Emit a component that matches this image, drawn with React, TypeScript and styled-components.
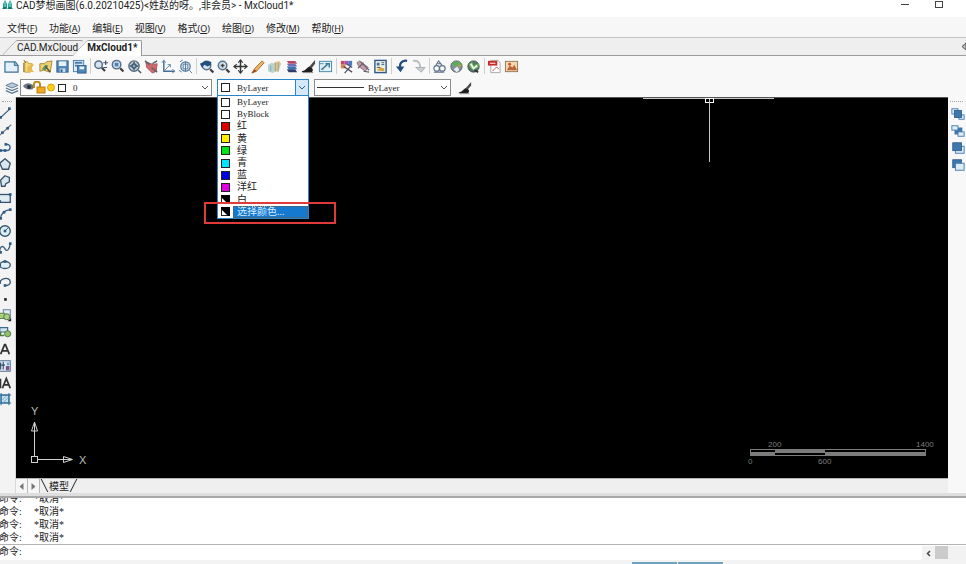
import React from "react";
import styled, { createGlobalStyle, css } from "styled-components";

const UI = `Roboto, "Noto Sans CJK SC", sans-serif`;
const SONG = `"Liberation Serif", "Noto Sans CJK SC", serif`;

const GlobalStyle = createGlobalStyle`
  *, *::before, *::after { box-sizing: border-box; }
  html, body, #root { height: 100%; }
  body { margin: 0; background: #f7f7f7; color: #222; font: 10px/14px ${UI}; overflow: hidden; }
  :where(button, select, input) { font: inherit; color: inherit; margin: 0; padding: 0; border: 0; background: none; border-radius: 0; }
  ul { list-style: none; margin: 0; padding: 0; }
  svg { display: block; flex: none; }
`;

const Window = styled.div`
  display: flex;
  flex-direction: column;
  height: 100vh;
`;

const TitleBar = styled.header`
  display: flex;
  flex: none;
  height: 17px;
  padding: 0 18px 0 2px;
  background: #fff;
`;

const Title = styled.h1`
  flex: 1;
  margin: 0 0 0 3px;
  font-size: 10px;
  line-height: 12px;
  font-weight: 400;
  white-space: nowrap;
`;

const WindowButtons = styled.div`
  display: flex;
  gap: 20px;
`;

const WindowButton = styled.button`
  width: 14px;
  height: 10px;
`;

const MenuBar = styled.nav`
  display: flex;
  flex: none;
  gap: 12px;
  height: 21px;
  padding: 2px 7px 0;
  background: #f7f7f7;
  border-bottom: 1px solid #c4c4c4;
`;

const MenuButton = styled.button`
  font: 10px/14px "Noto Sans CJK SC", sans-serif;
  white-space: nowrap;
  span { font-size: 9px; font-family: "Noto Sans", sans-serif; }
`;

const DocTabs = styled.div`
  display: flex;
  flex: none;
  height: 18px;
  padding: 2px 0 0 2px;
  background: #efefef;
  border-bottom: 1px solid #9d9d9d;
`;

const DocTab = styled.button<{ $active?: boolean }>`
  position: relative;
  height: 16px;
  padding: 0 5px 0 15px;
  margin-left: ${(p) => (p.$active ? -11 : 0)}px;
  line-height: 14px;
  font-weight: ${(p) => (p.$active ? 700 : 400)};
  text-align: left;
  white-space: nowrap;

  &::before, &::after {
    content: "";
    position: absolute;
    top: 0;
    bottom: ${(p) => (p.$active ? 0 : 1)}px;
    border-top: 1px solid #999;
    background: ${(p) => (p.$active ? "#fff" : "#efefef")};
  }
  &::before {
    left: 0;
    width: 40px;
    border-left: 1px solid #999;
    transform: skewX(-43deg);
    transform-origin: bottom left;
    border-top-left-radius: 2px;
  }
  &::after {
    left: 36px;
    right: 0;
    border-right: ${(p) => (p.$active ? "1px solid #999" : "0")};
    border-top-right-radius: 2px;
  }
  span { position: relative; z-index: 1; }
`;

const TabScroll = styled.button`
  width: 5px;
  height: 12px;
  margin-left: auto;
`;

const Toolbar = styled.div`
  display: flex;
  flex: none;
  align-items: center;
  height: 22px;
  padding: 0 0 2px 3px;
  background: #f8f8f8;
`;

const ToolButton = styled.button`
  display: grid;
  place-items: center;
  flex: none;
  width: 17px;
  height: 17px;
`;

const Separator = styled.span`
  flex: none;
  width: 1px;
  height: 16px;
  margin: 0 1px 0 2px;
  background: #cfcfcf;
`;

const PropertyBar = styled.div`
  display: flex;
  flex: none;
  align-items: center;
  gap: 5px;
  height: 19px;
  background: #f8f8f8;
`;

const LayerGroup = styled.div`
  display: flex;
  align-items: center;
  padding-left: 3px;
`;

const comboFrame = css<{ $open?: boolean }>`
  display: flex;
  align-items: center;
  height: 17px;
  background: #fff;
  border: 1px solid ${(p) => (p.$open ? "#2b84c4" : "#8b8b8b")};
  font: 9px/12px ${SONG};
`;

const Combo = styled.label<{ $size: number }>`
  ${comboFrame}
  width: ${(p) => p.$size}px;
  padding: 0 2px;
  gap: 2px;
`;

const ComboSelect = styled.select<{ $indent: number }>`
  flex: 1;
  min-width: 0;
  appearance: none;
  outline: 0;
  padding-left: ${(p) => p.$indent}px;
`;

const ComboAnchor = styled.div`
  position: relative;
`;

const ComboButton = styled.button`
  ${comboFrame}
  width: 92px;
  padding-left: 3px;
  gap: 7px;
  text-align: left;
`;

const ComboArrow = styled.span`
  display: grid;
  place-items: center;
  width: 13px;
  height: 15px;
  margin-left: auto;
  background: #d3e8f8;
  border-left: 1px solid #2b84c4;
`;

const ColorList = styled.ul`
  position: absolute;
  z-index: 5;
  top: 17px;
  left: 0;
  right: 0;
  display: grid;
  grid-auto-rows: 1fr;
  height: 123px;
  background: #fff;
  border: 1px solid #2b84c4;
  border-top: 0;
  font: 9px/12px ${SONG};
`;

const ColorOption = styled.li`
  position: relative;
  display: flex;
  align-items: stretch;
  padding-left: 3px;
`;

const OptionSwatch = styled.span`
  display: flex;
  align-items: center;
  width: 12px;
`;

const OptionLabel = styled.span<{ $selected: boolean; $cjk: boolean }>`
  flex: 1;
  padding-left: 4px;
  font-size: ${(p) => (p.$cjk ? 10 : 9)}px;
  color: ${(p) => (p.$selected ? "#d8ecff" : "#222")};
  background: ${(p) => (p.$selected ? "#1579d0" : "transparent")};
  outline: ${(p) => (p.$selected ? "1px dotted #6b5a48" : "0")};
  outline-offset: -1px;
  white-space: nowrap;
`;

const Highlight = styled.span`
  position: absolute;
  inset: -4px -28px -6px -14px;
  border: 2px solid #e03a3a;
`;

const Workspace = styled.div`
  display: flex;
  flex: 1;
  min-height: 0;
`;

const DrawTools = styled.aside`
  flex: none;
  width: 16px;
  overflow: hidden;
  background: #f3f3f4;
  border-right: 1px solid #d8d8d8;
`;

const Grip = styled.div`
  height: 1px;
  margin: 4px 3px 3px 2px;
  border-top: 1px dotted #a5a5a5;
`;

const DrawStack = styled.div`
  display: flex;
  flex-direction: column;
  height: 303px;
`;

const DrawButton = styled.button`
  display: flex;
  flex: 1;
  align-items: center;
  width: 14px;
  margin-left: -2px;
`;

const Drawing = styled.main`
  display: flex;
  flex: 1;
  flex-direction: column;
  min-width: 0;
`;

const Canvas = styled.section`
  position: relative;
  flex: 1;
  min-height: 0;
  overflow: hidden;
  background: #000;
  border-top: 1px solid #555;
`;

const Crosshair = styled.svg`
  position: absolute;
  top: -1px;
  right: 173px;
`;

const UcsIcon = styled.svg`
  position: absolute;
  left: 12px;
  bottom: 12px;
  font: 11px "Liberation Sans", sans-serif;
`;

const ScaleBar = styled.svg`
  position: absolute;
  right: 11px;
  bottom: 12px;
  font: 8px "Liberation Sans", sans-serif;
`;

const SheetTabs = styled.div`
  display: flex;
  flex: none;
  height: 15px;
  background: #efefef;
  border-top: 1px solid #b5b5b5;
`;

const SheetArrow = styled.button`
  display: grid;
  place-items: center;
  width: 12px;
  border-right: 1px solid #b8b8b8;
  background: #f6f6f6;
`;

const SheetTab = styled.button`
  position: relative;
  height: 13px;
  padding: 0 9px;
  font: 10px/12px "Noto Sans CJK SC", sans-serif;
  &::before, &::after {
    content: "";
    position: absolute;
    top: 0;
    bottom: 0;
    width: 1px;
    background: #222;
  }
  &::before { left: 4px; transform: skewX(27deg); }
  &::after { right: 4px; transform: skewX(-27deg); }
`;

const OrderTools = styled.aside`
  flex: none;
  width: 18px;
  background: #f8f8f8;
`;

const OrderButton = styled.button`
  display: block;
  height: 17px;
  padding-left: 3px;
`;

const Splitter = styled.div`
  flex: none;
  height: 5px;
  background: #dedede;
  border-bottom: 2px solid #a8a8a8;
`;

const CommandLog = styled.section`
  display: flex;
  flex: none;
  flex-direction: column;
  justify-content: flex-end;
  height: 47px;
  overflow: hidden;
  background: #fff;
  border-bottom: 1px solid #b4b4b4;
  font: 10px/13px ${SONG};
`;

const LogLine = styled.div`
  display: flex;
  flex: none;
  gap: 12px;
  margin-left: -1px;
  span:first-child { width: 23px; }
`;

const CommandRow = styled.div`
  display: flex;
  flex: none;
  height: 15px;
  background: #fff;
  font: 10px/13px ${SONG};
`;

const CommandLabel = styled.label`
  display: flex;
  flex: 1;
  margin-left: -1px;
`;

const CommandInput = styled.input`
  flex: 1;
  outline: 0;
`;

const ScrollStrip = styled.div`
  display: flex;
  width: 44px;
  margin-top: 1px;
  background: #f2f2f2;
`;

const ScrollButton = styled.button`
  display: grid;
  place-items: center;
  width: 13px;
`;

const ScrollThumb = styled.span`
  width: 13px;
  height: 13px;
  background: #cbcbcb;
`;

const StatusBar = styled.footer`
  display: flex;
  flex: none;
  justify-content: flex-end;
  align-items: flex-end;
  gap: 1px;
  height: 4px;
  padding-right: 243px;
  background: #f3f3f3;
`;

const StatusCell = styled.span`
  width: 45px;
  height: 2px;
  background: #6ea3bf;
`;

type IconProps = { size?: number; children: React.ReactNode };
const Icon = ({ size = 15, children }: IconProps) => (
  <svg width={size} height={size} viewBox="0 0 16 16" fill="none" aria-hidden="true">
    {children}
  </svg>
);

const Lens = ({ cx = 7, cy = 7, r = 4 }: { cx?: number; cy?: number; r?: number }) => (
  <g>
    <circle cx={cx} cy={cy} r={r} fill="#d5e4f0" stroke="#56718a" strokeWidth="1.6" />
    <path d={`M${cx + r - 0.6} ${cy + r - 0.6}l3.4 3.4`} stroke="#443f3c" strokeWidth="2.4" />
  </g>
);

const Brush = () => (
  <g>
    <path d="M15 1L9 8l2 2 4-5z" fill="#4a4a4a" />
    <path d="M9 8c-3 1-3 4-8 5v1h10c2-1 2-3 1-4z" fill="#1f1f1f" />
    <path d="M2 14.500h11" stroke="#8a8a8a" />
  </g>
);

const Floppy = () => (
  <g>
    <rect x="2" y="2" width="12" height="12" fill="#4f86b8" stroke="#2f5f8d" />
    <rect x="4" y="2.5" width="8" height="5" fill="#e4eff8" />
    <rect x="5" y="10" width="6" height="4" fill="#c7dcec" />
    <rect x="6" y="11" width="2" height="3" fill="#2f5f8d" />
  </g>
);

const toolGroups: { name: string; art: React.ReactNode }[][] = [
  [
    { name: "新建", art: <><path d="M1 3h11l3 4v7H1z" fill="#e2f1fb" stroke="#3b7294" strokeWidth="1.3" /><path d="M11 3v4h4" fill="#7fb4d4" stroke="#3b7294" /></> },
    { name: "打开", art: <><path d="M4 3h3l1 2h4l-2 9H4z" fill="#f3da7a" stroke="#c9a13c" /><path d="M7 8l7-3-3 5 3 4-7-1z" fill="#e9b84e" /><path d="M3 1l2 3M3 4v10" stroke="#806020" /></> },
    { name: "打开云图", art: <><path d="M2 5h5l2-2 6-1-2 12-7-2-4 1z" fill="#f0d070" stroke="#a58a3a" /><path d="M4 11l4-5 3 1-3 5z" fill="#5d9260" /><path d="M8 8l5 6" stroke="#56503c" strokeWidth="1.5" /></> },
    { name: "保存", art: <Floppy /> },
    { name: "另存为", art: <><rect x="1.5" y="1.5" width="11" height="12" fill="#dcebf6" stroke="#4e7fab" /><path d="M3 4h8M3 7h4" stroke="#4e7fab" strokeWidth="2" /><rect x="6" y="7" width="9" height="8" fill="#4f86b8" stroke="#2f5f8d" /><rect x="8" y="8" width="5" height="3" fill="#e9f2f9" /></> },
  ],
  [
    { name: "缩放", art: <><Lens cx={6} cy={6} /><path d="M11 4h5M13.500 1.500v5M11 9h4" stroke="#3c5266" strokeWidth="1.2" /></> },
    { name: "窗口缩放", art: <><Lens cx={7} cy={6} r={4.5} /><rect x="5" y="4" width="4" height="4" fill="#4c83b4" /></> },
    { name: "范围缩放", art: <><circle cx="7.5" cy="7.5" r="5.5" fill="#c2d5e4" stroke="#56697b" strokeWidth="1.5" /><path d="M7.500 3v9M3 7.500h9M12 12l3 3" stroke="#3b5266" strokeWidth="1.5" /><rect x="5.5" y="5.5" width="4" height="4" fill="#84a8c6" stroke="#2e4558" /></> },
    { name: "平移", art: <><path d="M2 3l8 3 4-1-1 8-4 2-6-6z" fill="#d4696c" stroke="#a0555b" /><path d="M1 2l5 4M9 5l5-3M8 9l6 5" stroke="#58636e" strokeWidth="1.5" /></> },
    { name: "坐标系", art: <><path d="M3 2v11h11" stroke="#426d96" strokeWidth="1.5" /><path d="M1 4l2-3 2 3M12 11l3 2-3 2M3 13l7-7M7 6h3v3" stroke="#5f88ad" /></> },
    { name: "动态缩放", art: <><circle cx="8" cy="8" r="5" fill="#e6eef5" stroke="#4e7395" strokeWidth="1.3" /><path d="M5.500 5.500h5v5h-5zM8 3v10M12 12l3 3" stroke="#4a79a3" /><path d="M2 3l3-2M1 12l3 2" stroke="#4a79a3" /></> },
  ],
  [
    { name: "上一视图", art: <><Lens cx={8} cy={7} r={4.5} /><path d="M1 5l6-3 6 1v3l-4 2-3-2-3 3z" fill="#234f7c" /></> },
    { name: "放大", art: <><Lens cx={7} cy={7} r={4.5} /><path d="M5 7h4M7 5v4" stroke="#444" strokeWidth="1.5" /></> },
    { name: "实时平移", art: <><path d="M8 1v14M1 8h14" stroke="#333" strokeWidth="1.6" /><path d="M5.500 4L8 1l2.500 3M5.500 12L8 15l2.500-3M4 5.500L1 8l3 2.500M12 5.500L15 8l-3 2.500" stroke="#333" strokeWidth="1.2" /></> },
    { name: "画笔", art: <><path d="M13 2l2 2-8 9-5 2 3-5z" fill="#efb364" stroke="#a9702f" /><path d="M2 15l3-4 2 2z" fill="#9b4528" /></> },
    { name: "图层匹配", art: <><path d="M1 6l4-2 5 2v7l-4 2-5-2z" fill="#b5d6cf" /><path d="M7 4l6-2 2 3-3 9-5-2z" fill="#dcc48e" /><path d="M4 7v6M9 4v9M12 4v9" stroke="#8aa6bb" /></> },
    { name: "图层颜色", art: <><path d="M3 2h9l2 3H5z" fill="#b84866" /><path d="M3 5h9l2 3H5z" fill="#776cb8" /><path d="M3 8h9l2 3H5z" fill="#3975b5" /><path d="M3 11h9l2 3H5z" fill="#303c6c" /></> },
    { name: "格式刷", art: <Brush /> },
    { name: "图像框", art: <><rect x="1.5" y="2.5" width="13" height="11" fill="#e1f0f5" stroke="#4586a4" /><path d="M4 11l6-5M8 5h4v4" stroke="#397696" strokeWidth="1.5" /><path d="M1 5h5M3 11h3" stroke="#4586a4" /></> },
  ],
  [
    { name: "颜色", art: <><path d="M2 2h4v4H2z" fill="#d3445c" /><path d="M6 2h4v4H6z" fill="#9a56bd" /><path d="M10 2h4v5h-4z" fill="#4b78c7" /><path d="M2 6h5v4H2z" fill="#d68846" /><path d="M5 8l9 6M13 7l-7 8M8 5l6 4" stroke="#4d4d66" strokeWidth="1.3" /></> },
    { name: "擦除", art: <><path d="M1 4l3-2 9 7-3 4-7-5z" fill="#d09aa2" stroke="#7d7883" /><path d="M5 3l9 9M2 10l6-6M8 13l6 1" stroke="#5c6370" strokeWidth="1.2" /></> },
    { name: "属性", art: <><rect x="2" y="1.5" width="12" height="13" fill="#f0f0e6" stroke="#335b8a" strokeWidth="1.5" /><path d="M4 4h3v3H4z" fill="#3d76a8" /><path d="M9 4h3M9 6h3" stroke="#335b8a" /><path d="M4 12l4-3 4 1v3z" fill="#d0a43b" /><path d="M4 9h4" stroke="#6b4b32" /></> },
  ],
  [
    { name: "撤销", art: <><path d="M14 2c-6-1-9 3-7 10" stroke="#254d7b" strokeWidth="2.4" /><path d="M2 8h9l-4 6z" fill="#254d7b" /></> },
    { name: "重做", art: <><path d="M2 2c6-1 9 3 7 10" stroke="#b8bec3" strokeWidth="2" /><path d="M5 9h10l-4 5z" fill="#cbd0d4" stroke="#a7adb2" /></> },
  ],
  [
    { name: "查找", art: <><circle cx="5" cy="10" r="3" stroke="#60738a" strokeWidth="1.3" /><circle cx="11" cy="10" r="3" stroke="#60738a" strokeWidth="1.3" /><path d="M4 7l3-5 4 5M6 5h4M2 14h11" stroke="#60738a" strokeWidth="1.2" /></> },
    { name: "云端上传", art: <><circle cx="8" cy="8" r="6" fill="#86949a" stroke="#515f65" /><path d="M4 4c3-2 5 0 8-1l2 5-6-2-3 3z" fill="#5caf51" /><path d="M5 11l4-3 2 4-3 2z" fill="#e8eff3" /><path d="M10 5l3 2-2 2z" fill="#dc9b30" /></> },
    { name: "云端下载", art: <><circle cx="8" cy="8" r="6" fill="#58746b" stroke="#3e4e50" /><path d="M3 5l4-2 1 4 6-3-1 5-5 3-4-3z" fill="#63b053" /><path d="M5 5l3 5 4-3" stroke="#f2f5f2" strokeWidth="2" /><path d="M9 12l4 2" stroke="#333" strokeWidth="2" /></> },
  ],
  [
    { name: "输出PDF", art: <><path d="M4 1.500h8l2 3v10H4z" fill="#fff" stroke="#a9a9a9" /><path d="M1 2h10v5H1z" fill="#c42b2b" /><path d="M3 4.500h6" stroke="#fff" /><path d="M6 13c4-5 4-5 7-2" stroke="#c94b4b" /></> },
    { name: "输出图片", art: <><rect x="1.5" y="2.5" width="13" height="11" fill="#f4d8ad" stroke="#93775e" /><path d="M3 12l3-5 3 2 2-3 3 6z" fill="#bb6539" /><circle cx="6" cy="5.5" r="1.5" fill="#d14b2d" /></> },
  ],
];

const node = (x: number, y: number) => <rect x={x - 1.5} y={y - 1.5} width="3" height="3" fill="#2d5a86" />;

const drawTools: { name: string; art: React.ReactNode }[] = [
  { name: "直线", art: <><path d="M2 14L14 3" stroke="#3c607d" strokeWidth="1.5" />{node(3, 13)}{node(13, 3)}</> },
  { name: "构造线", art: <><path d="M1 15L15 2" stroke="#777" strokeWidth="1.2" />{node(5, 11)}{node(11, 6)}</> },
  { name: "多段线", art: <><path d="M2 12h8c5 0 5-7 0-7H8" stroke="#315f89" strokeWidth="1.6" />{node(3, 12)}{node(8, 12)}{node(9, 5)}</> },
  { name: "正多边形", art: <path d="M8 2l6 5-2 7H5L2 7z" fill="#d9e8ef" stroke="#37526a" strokeWidth="1.5" /> },
  { name: "多边形", art: <path d="M8 2l5 2v5l-4 2-1 3H4L3 7z" fill="#d9e8ef" stroke="#37526a" strokeWidth="1.5" /> },
  { name: "矩形", art: <><rect x="1" y="4" width="13" height="9" fill="#dfedf3" stroke="#37526a" strokeWidth="1.5" />{node(2, 12)}{node(14, 4)}</> },
  { name: "圆弧", art: <><path d="M3 14C3 7 7 4 14 3" stroke="#3c607d" strokeWidth="1.5" />{node(3, 13)}{node(7, 6)}{node(14, 3)}</> },
  { name: "圆", art: <><circle cx="8" cy="8" r="6" fill="#dfeff5" stroke="#34536e" strokeWidth="1.5" /><path d="M8 8l4-4" stroke="#34536e" />{node(8, 8)}</> },
  { name: "样条曲线", art: <><path d="M2 13c0-8 4-8 6-4s5 1 6-6" stroke="#3c607d" strokeWidth="1.5" />{node(3, 13)}{node(14, 3)}</> },
  { name: "椭圆", art: <><ellipse cx="8" cy="8" rx="6" ry="4" fill="#e3f1f6" stroke="#34536e" strokeWidth="1.5" />{node(8, 4)}{node(2, 8)}</> },
  { name: "椭圆弧", art: <><path d="M3 10C0 4 14 1 14 8c0 3-3 4-6 4" stroke="#34536e" strokeWidth="1.5" />{node(8, 12)}</> },
  { name: "点", art: <rect x="7" y="7" width="3" height="3" fill="#222" /> },
  { name: "插入块", art: <><rect x="6" y="2" width="8" height="9" fill="#e3edf5" stroke="#4e718f" /><path d="M1 6h7v6H1z" fill="#a7cf80" stroke="#4c7c39" /><circle cx="10" cy="10" r="3.5" fill="#a9ce85" stroke="#436b39" /><path d="M15 11v4h-4z" fill="#222" /></> },
  { name: "创建块", art: <><path d="M2 3h9v5H2z" fill="#d4e7ef" stroke="#3c6b8c" strokeWidth="1.4" /><circle cx="11" cy="10" r="3.5" fill="#91c26d" stroke="#486e39" /><path d="M3 8v4h4" stroke="#4c7c39" strokeWidth="1.5" /></> },
  { name: "单行文字", art: <path d="M3 14L7.500 3h1L13 14M5 10h6" stroke="#333" strokeWidth="2" /> },
  { name: "图案填充", art: <><rect x="1" y="2" width="13" height="12" fill="#dfe9f1" stroke="#3e6588" /><path d="M3 4v8M6 3v9M3 7h5" stroke="#344e69" strokeWidth="1.3" /><path d="M10 4h3v3h-3z" fill="#68a8cf" /><path d="M9 8h4v5H9z" fill="#7d5387" /></> },
  { name: "多行文字", art: <><path d="M3 3v11" stroke="#333" strokeWidth="1.5" /><path d="M5 14L9.500 3L14 14M7 10h5" stroke="#333" strokeWidth="2" /></> },
  { name: "面域", art: <><rect x="3.5" y="3.5" width="9" height="9" fill="#c6dfec" stroke="#306e99" strokeWidth="1.3" /><path d="M3.500 1v14M12.500 1v14M1 3.500h14M1 12.500h14" stroke="#306e99" strokeWidth="1.2" /><path d="M5 9l4-4M6 12l6-6" stroke="#6ba0c2" /></> },
];

const dark = "#3f76ae";
const pale = "#dcebf6";
const orderTools: { name: string; art: React.ReactNode }[] = [
  { name: "前置", art: <><rect x="1" y="2" width="7" height="6" fill={pale} stroke={dark} /><rect x="9" y="9" width="6" height="5" fill={pale} stroke={dark} /><rect x="4" y="4" width="8" height="8" fill={dark} stroke="#315f8f" /></> },
  { name: "后置", art: <><rect x="4" y="4" width="9" height="8" fill={dark} /><rect x="1" y="2" width="7" height="5" fill={pale} stroke={dark} /><rect x="8" y="9" width="7" height="5" fill={pale} stroke={dark} /></> },
  { name: "置于对象之上", art: <><rect x="5" y="6" width="10" height="8" fill={pale} stroke={dark} /><rect x="2" y="2" width="10" height="9" fill={dark} stroke="#315f8f" /></> },
  { name: "置于对象之下", art: <><rect x="2" y="2" width="10" height="9" fill={dark} stroke="#315f8f" /><rect x="5" y="6" width="10" height="8" fill={pale} stroke={dark} /></> },
];

const Chevron = ({ color = "#555" }: { color?: string }) => (
  <svg width="8" height="6" viewBox="0 0 8 6" fill="none" aria-hidden="true">
    <path d="M1 1l3 3 3-3" stroke={color} />
  </svg>
);

const Swatch = ({ fill = "#fff", split }: { fill?: string; split?: boolean }) => (
  <svg width="9" height="9" viewBox="0 0 9 9" aria-hidden="true">
    <rect x=".5" y=".5" width="8" height="8" fill={fill} stroke="#222" />
    {split && <path d="M0 0h9v9H7L1 3z" fill="#000" />}
  </svg>
);

const menus = [["文件", "F"], ["功能", "A"], ["编辑", "E"], ["视图", "V"], ["格式", "O"], ["绘图", "D"], ["修改", "M"], ["帮助", "H"]];

const colors: { label: string; fill?: string; split?: boolean; selected?: boolean }[] = [
  { label: "ByLayer" },
  { label: "ByBlock" },
  { label: "红", fill: "#e00000" },
  { label: "黄", fill: "#ffee00" },
  { label: "绿", fill: "#00e51a" },
  { label: "青", fill: "#00e5ff" },
  { label: "蓝", fill: "#0000e0" },
  { label: "洋红", fill: "#e000e0" },
  { label: "白", split: true },
  { label: "选择颜色...", split: true, selected: true },
];

export default function App() {
  return (
    <Window>
      <GlobalStyle />
      <TitleBar>
        <svg width="11" height="10" viewBox="0 0 11 10" aria-hidden="true">
          <path d="M1 8V4l2-4 2 4v4z" fill="#179c94" />
          <path d="M6 8V4l2-4 2 4v4z" fill="#27aaa0" />
          <path d="M0 9l3-3 2 3 3-3 3 3z" fill="#11766f" />
          <path d="M3 2v5M8 2v5" stroke="#9ee0da" />
        </svg>
        <Title>CAD梦想画图(6.0.20210425)&lt;姓赵的呀。,非会员&gt; - MxCloud1*</Title>
        <WindowButtons>
          <WindowButton aria-label="最小化">
            <svg width="14" height="10" viewBox="0 0 14 10"><path d="M1 4.500h8" stroke="#444" /></svg>
          </WindowButton>
          <WindowButton aria-label="最大化">
            <svg width="14" height="10" viewBox="0 0 14 10"><rect x="1.5" y="1.5" width="7" height="6" fill="none" stroke="#444" /></svg>
          </WindowButton>
        </WindowButtons>
      </TitleBar>

      <MenuBar aria-label="菜单">
        {menus.map(([label, key]) => (
          <MenuButton key={key}>{label}<span>(<u>{key}</u>)</span></MenuButton>
        ))}
      </MenuBar>

      <DocTabs>
        <DocTab><span>CAD.MxCloud</span></DocTab>
        <DocTab $active><span>MxCloud1*</span></DocTab>
        <TabScroll aria-label="向左滚动">
          <svg width="5" height="9" viewBox="0 0 5 9"><path d="M5 1L1 4.500 5 8z" fill="#bbb" stroke="#555" /></svg>
        </TabScroll>
      </DocTabs>

      <Toolbar role="toolbar" aria-label="标准工具">
        {toolGroups.map((group, i) => (
          <React.Fragment key={i}>
            {i > 0 && <Separator />}
            {group.map((tool) => (
              <ToolButton key={tool.name} aria-label={tool.name}><Icon>{tool.art}</Icon></ToolButton>
            ))}
          </React.Fragment>
        ))}
      </Toolbar>

      <PropertyBar>
        <LayerGroup>
          <ToolButton aria-label="图层">
            <Icon size={14}>
              <path d="M1 5l7-3 7 3-7 3z" fill="#b9cbda" stroke="#587792" />
              <path d="M1 8l7 3 7-3M1 11l7 3 7-3" stroke="#587792" strokeWidth="1.5" />
            </Icon>
          </ToolButton>
          <Combo $size={192}>
            <svg width="44" height="13" viewBox="0 0 44 13" fill="none" aria-hidden="true">
              <path d="M0 5c3-4 7-3 10-1v4c-4 1-7 1-10-3z" fill="#6b7683" />
              <circle cx="6" cy="6" r="2" fill="#26313d" />
              <path d="M11 7V3c0-3 6-3 6 0v3" stroke="#c28a1c" strokeWidth="2" />
              <rect x="14" y="6" width="8" height="6" fill="#f0a91d" stroke="#b87c14" />
              <circle cx="28" cy="6.5" r="3.5" fill="#ffcf1c" stroke="#e0a100" />
              <rect x="35.5" y="3.5" width="7" height="7" fill="#fff" stroke="#222" />
            </svg>
            <ComboSelect $indent={4} aria-label="当前图层" defaultValue="0"><option>0</option></ComboSelect>
            <Chevron />
          </Combo>
        </LayerGroup>
        <ComboAnchor>
          <ComboButton $open role="combobox" aria-label="颜色" aria-expanded="true" aria-controls="colors">
            <Swatch />
            <span>ByLayer</span>
            <ComboArrow><Chevron color="#2c5f8a" /></ComboArrow>
          </ComboButton>
          <ColorList id="colors" role="listbox" aria-label="颜色">
            {colors.map((c) => (
              <ColorOption key={c.label} role="option" aria-selected={!!c.selected}>
                <OptionSwatch><Swatch fill={c.fill} split={c.split} /></OptionSwatch>
                <OptionLabel $selected={!!c.selected} $cjk={!c.label.startsWith("By")}>{c.label}</OptionLabel>
                {c.selected && <Highlight />}
              </ColorOption>
            ))}
          </ColorList>
        </ComboAnchor>
        <Combo $size={137}>
          <svg width="47" height="3" viewBox="0 0 47 3" aria-hidden="true"><path d="M0 1.500h47" stroke="#333" /></svg>
          <ComboSelect $indent={2} aria-label="线型" defaultValue="ByLayer"><option>ByLayer</option></ComboSelect>
          <Chevron />
        </Combo>
        <ToolButton aria-label="匹配属性"><Icon size={14}><Brush /></Icon></ToolButton>
      </PropertyBar>

      <Workspace>
        <DrawTools aria-label="绘图工具">
          <Grip />
          <DrawStack>
            {drawTools.map((t) => (
              <DrawButton key={t.name} aria-label={t.name}><Icon size={14}>{t.art}</Icon></DrawButton>
            ))}
          </DrawStack>
        </DrawTools>

        <Drawing>
          <Canvas aria-label="绘图区">
            <Crosshair width="132" height="67" viewBox="0 0 132 67" fill="none" stroke="#c4c4c4" aria-hidden="true">
              <path d="M0 1.500h131" />
              <rect x="62.5" y="1.5" width="8" height="4" stroke="#fff" />
              <path d="M66.500 2v63" />
            </Crosshair>
            <UcsIcon width="64" height="62" viewBox="0 0 64 62" fill="none" stroke="#d0d0d0">
              <rect x="3.5" y="52.5" width="6" height="6" />
              <path d="M6.500 52V19M10 55.500h34" />
              <path d="M6.500 18L3.500 27h6zM44.500 55.500l-9-3v6z" />
              <text x="3" y="11" fill="#bdbdbd" stroke="none">Y</text>
              <text x="51" y="60" fill="#bdbdbd" stroke="none">X</text>
            </UcsIcon>
            <ScaleBar width="190" height="28" viewBox="0 0 190 28" fill="#7c7c7c">
              <rect x="3.5" y="11.5" width="175" height="6" fill="none" stroke="#7c7c7c" />
              <path d="M28 11h50v4H28zM3 14h25v4H3zM78 14h101v4H78z" />
              <text x="21" y="9">200</text>
              <text x="169" y="9">1400</text>
              <text x="1" y="26">0</text>
              <text x="71" y="26">600</text>
            </ScaleBar>
          </Canvas>
          <SheetTabs>
            <SheetArrow aria-label="上一个">
              <svg width="5" height="7" viewBox="0 0 5 7"><path d="M4.500 0v7L.5 3.500z" fill="#777" /></svg>
            </SheetArrow>
            <SheetArrow aria-label="下一个">
              <svg width="5" height="7" viewBox="0 0 5 7"><path d="M.5 0v7l4-3.500z" fill="#777" /></svg>
            </SheetArrow>
            <SheetTab>模型</SheetTab>
          </SheetTabs>
        </Drawing>

        <OrderTools aria-label="绘图次序">
          <Grip />
          {orderTools.map((t) => (
            <OrderButton key={t.name} aria-label={t.name}><Icon size={14}>{t.art}</Icon></OrderButton>
          ))}
        </OrderTools>
      </Workspace>

      <Splitter />
      <CommandLog aria-label="命令历史">
        {[0, 1, 2, 3].map((n) => (
          <LogLine key={n}><span>命令:</span><span>*取消*</span></LogLine>
        ))}
      </CommandLog>
      <CommandRow>
        <CommandLabel>命令:<CommandInput type="text" /></CommandLabel>
        <ScrollStrip>
          <ScrollButton aria-label="向左">
            <svg width="5" height="7" viewBox="0 0 5 7" fill="none"><path d="M4 1L1.500 3.500 4 6" stroke="#444" strokeWidth="1.5" /></svg>
          </ScrollButton>
          <ScrollThumb />
        </ScrollStrip>
      </CommandRow>
      <StatusBar><StatusCell /><StatusCell /></StatusBar>
    </Window>
  );
}
